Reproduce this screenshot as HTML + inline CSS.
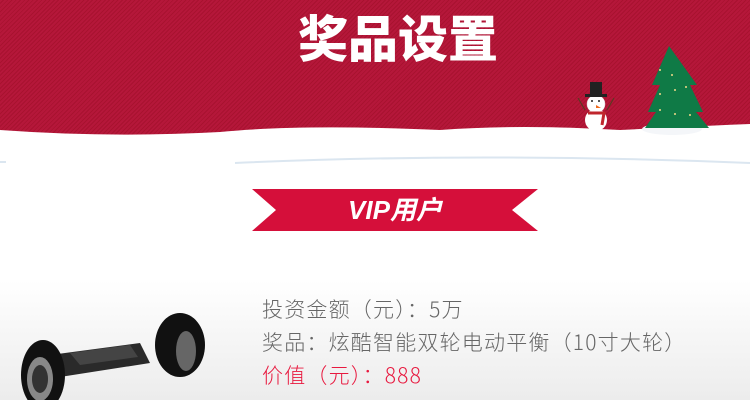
<!DOCTYPE html>
<html><head><meta charset="utf-8"><style>
body{margin:0;width:750px;height:400px;overflow:hidden;position:relative;font-family:"Liberation Sans","Noto Sans CJK SC",sans-serif;background:linear-gradient(#fff 0,#fff 280px,#ececec 400px);}
.top{position:absolute;left:0;top:0;width:750px;height:140px;background:repeating-linear-gradient(135deg,#b5173a 0 2px,#a8122f 2px 3px);}
h1{position:absolute;left:298px;width:210px;top:0px;margin:0;color:#fff;font-size:50px;font-weight:900;letter-spacing:0;white-space:nowrap;font-family:"Noto Sans CJK SC",sans-serif;}
.t{position:absolute;left:262px;font-size:21px;color:#666;font-weight:300;font-family:"Noto Sans CJK SC",sans-serif;line-height:26px;white-space:nowrap;letter-spacing:1.2px;}
</style></head><body>
<div class="top"></div>
<svg style="position:absolute;left:0;top:0" width="750" height="200">
<path d="M0 130 Q110 138 220 132 Q300 124 440 130 Q520 124 620 130 Q700 126 750 124 L750 200 L0 200Z" fill="#fff"/>
<path d="M235 163 Q480 152 750 163" stroke="#dbe6f0" stroke-width="2" fill="none"/>
<path d="M0 162 L6 162" stroke="#dbe6f0" stroke-width="2"/>
<ellipse cx="672" cy="129" rx="30" ry="6" fill="#f4f6f9"/>
<polygon points="669,46 652,85 660,85 648,112 656,112 645,128 709,128 696,112 703,112 690,85 697,85" fill="#0f7a46"/>
<g fill="#f2d98a"><circle cx="660" cy="70" r="1"/><circle cx="672" cy="75" r="1"/><circle cx="660" cy="94" r="1"/><circle cx="675" cy="90" r="1"/><circle cx="686" cy="87" r="1"/><circle cx="660" cy="110" r="1"/><circle cx="675" cy="114" r="1"/><circle cx="690" cy="115" r="1"/></g>
<circle cx="596" cy="120" r="11" fill="#fff"/><circle cx="596" cy="104" r="9" fill="#fff" stroke="#ddd" stroke-width=".5"/>
<rect x="590" y="82" width="12" height="13" fill="#222"/><rect x="585" y="94" width="22" height="3" fill="#222"/>
<path d="M588 113 L604 113 L602 125" stroke="#c0262d" stroke-width="3" fill="none"/>
<path d="M585 110 L578 98 M607 110 L614 98" stroke="#5a3a22" stroke-width="1.2"/>
<polygon points="596,105 601,108 596,108" fill="#f06a1c"/>
<circle cx="592" cy="101" r="1" fill="#222"/><circle cx="599" cy="101" r="1" fill="#222"/>
</svg>
<h1>奖品设置</h1>
<svg style="position:absolute;left:252px;top:189px" width="286" height="44"><polygon points="0,0 286,0 260,21 286,42 0,42 24,21" fill="#d50f3a"/></svg>
<div style="position:absolute;left:252px;width:286px;top:194px;text-align:center;color:#fff;font-size:26px;font-weight:bold;font-style:italic;line-height:32px">VIP用户</div>
<div class="t" style="top:296px">投资金额（元）：5万</div>
<div class="t" style="top:329px">奖品：炫酷智能双轮电动平衡（10寸大轮）</div>
<div class="t" style="top:362px;color:#e8193f">价值（元）：888</div>
<svg style="position:absolute;left:10px;top:305px" width="200" height="95">
<path d="M40 50 L130 38 L140 58 L50 72Z" fill="#2a2a2a"/>
<path d="M60 48 L120 40 L128 52 L70 60Z" fill="#444"/>
<ellipse cx="170" cy="40" rx="25" ry="32" fill="#111"/><ellipse cx="176" cy="46" rx="10" ry="20" fill="#666"/>
<ellipse cx="33" cy="70" rx="22" ry="35" fill="#111"/><ellipse cx="30" cy="74" rx="13" ry="22" fill="#888"/><ellipse cx="30" cy="74" rx="8" ry="14" fill="#333"/>
</svg>
</body></html>
